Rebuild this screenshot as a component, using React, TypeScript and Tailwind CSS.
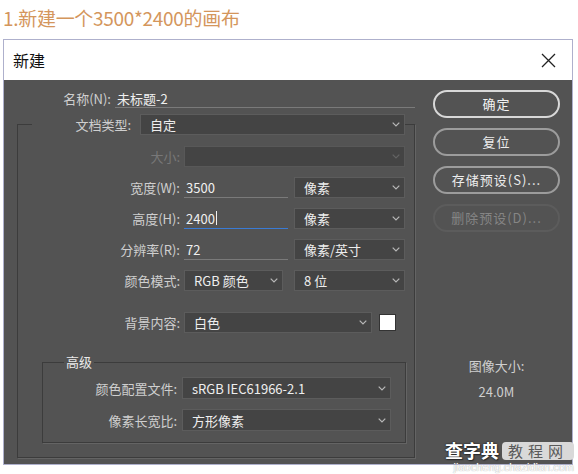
import React from 'react';

const CJK = { fontFamily: '"Noto Sans CJK SC", "Liberation Sans", sans-serif' };

const Chevron = ({ dim }: { dim?: boolean }) => (
  <svg width="8" height="5" viewBox="0 0 8 5" className={dim ? 'text-[#646464]' : 'text-[#b8b8b8]'}>
    <path d="M0.7 0.7 L4 4 L7.3 0.7" fill="none" stroke="currentColor" strokeWidth="1.2" />
  </svg>
);

const Select = ({ value, className = '', dim }: { value?: string; className?: string; dim?: boolean }) => (
  <div
    className={`flex h-[21px] items-center justify-between border border-[#5c5c5c] bg-[#444444] pl-[9px] pr-[4px] text-[13px] leading-none text-[#eeeeee] ${className}`}
  >
    <span>{value}</span>
    <Chevron dim={dim} />
  </div>
);

const Field = ({ value, active, className = '' }: { value: string; active?: boolean; className?: string }) => (
  <div
    className={`flex h-[21px] items-center border-b pl-[2px] text-[13px] leading-none text-[#f0f0f0] ${
      active ? 'border-[#3a7bd5]' : 'border-[#7a7a7a]'
    } ${className}`}
  >
    <span>{value}</span>
    {active && <span className="ml-[1px] h-[14px] w-px bg-[#f0f0f0]" />}
  </div>
);

const Label = ({ text, className = '', dim }: { text: string; className?: string; dim?: boolean }) => (
  <div className={`shrink-0 text-right text-[13px] leading-none ${dim ? 'text-[#787878]' : 'text-[#cfcfcf]'} ${className}`}>
    {text}
  </div>
);

const Button = ({ text, variant }: { text: string; variant: 'primary' | 'normal' | 'disabled' }) => {
  const cls =
    variant === 'primary'
      ? 'border-2 border-[#d8d8d8] text-[#f2f2f2]'
      : variant === 'normal'
      ? 'border-2 border-[#9c9c9c] text-[#ececec]'
      : 'border-2 border-[#5c5c5c] text-[#858585]';
  return (
    <div className={`flex h-[28px] w-[127px] items-center justify-center rounded-full text-[13px] tracking-[1px] ${cls}`}>
      {text}
    </div>
  );
};

export default function App() {
  return (
    <div className="relative h-[474px] w-[578px] overflow-hidden bg-white" style={CJK}>
      <div className="h-[38px] pl-[3px] pt-[4px] text-[19px] leading-[28px] tracking-[-0.3px] text-[#d4965c]">
        1.新建一个3500*2400的画布
      </div>

      <div className="ml-[3px] mt-[1px] flex h-[426px] w-[570px] flex-col border border-[#aeb0cc]">
        {/* title bar */}
        <div className="flex h-[40px] shrink-0 items-center justify-between bg-white pl-[9px] pr-[16px]">
          <span className="text-[16px] text-[#111111]">新建</span>
          <svg width="15" height="15" viewBox="0 0 15 15">
            <path d="M1 1 L14 14 M14 1 L1 14" stroke="#222" strokeWidth="1.3" />
          </svg>
        </div>

        {/* body */}
        <div className="flex flex-1 bg-[#535353] pl-[13px]">
          {/* left column */}
          <div className="flex w-[398px] flex-col pt-[9px]">
            <div className="flex h-[19px] items-center">
              <Label text="名称(N):" className="w-[94px]" />
              <div className="ml-[4px] flex h-[19px] flex-1 items-center border-b border-[#7a7a7a] pl-[2px] text-[13px] leading-none text-[#f0f0f0]">
                未标题-2
              </div>
            </div>

            <fieldset className="mt-[6px] border border-[#3c3c3c] pb-[14px] shadow-[1px_1px_0_#646464]">
              <legend className="ml-[14px]">
                <div className="flex h-[21px] items-center">
                  <Label text="文档类型:" className="w-[101px] pr-[2px]" />
                  <Select value="自定" className="ml-[7px] w-[265px]" />
                </div>
              </legend>

              <div className="flex flex-col gap-[10px] pt-[11px]">
                <div className="flex items-center">
                  <Label text="大小:" className="w-[162px]" dim />
                  <Select className="ml-[4px] w-[221px] border-[#585858] bg-[#4e4e4e]" dim />
                </div>
                <div className="flex items-center">
                  <Label text="宽度(W):" className="w-[162px]" />
                  <Field value="3500" className="ml-[4px] w-[104px]" />
                  <Select value="像素" className="ml-[6px] w-[111px]" />
                </div>
                <div className="flex items-center">
                  <Label text="高度(H):" className="w-[162px]" />
                  <Field value="2400" active className="ml-[4px] w-[104px]" />
                  <Select value="像素" className="ml-[6px] w-[111px]" />
                </div>
                <div className="flex items-center">
                  <Label text="分辨率(R):" className="w-[162px]" />
                  <Field value="72" className="ml-[4px] w-[104px]" />
                  <Select value="像素/英寸" className="ml-[6px] w-[111px]" />
                </div>
                <div className="flex items-center">
                  <Label text="颜色模式:" className="w-[162px]" />
                  <Select value="RGB 颜色" className="ml-[4px] w-[99px]" />
                  <Select value="8 位" className="ml-[11px] w-[111px]" />
                </div>
                <div className="mt-[11px] flex items-center">
                  <Label text="背景内容:" className="w-[162px]" />
                  <Select value="白色" className="ml-[4px] w-[188px]" />
                  <div className="ml-[7px] h-[17px] w-[17px] border border-[#333333] bg-white" />
                </div>
              </div>

              <fieldset className="ml-[24px] mt-[20px] w-[364px] border border-[#3c3c3c] pb-[11px] shadow-[1px_1px_0_#646464]">
                <legend className="ml-[21px] px-[2px] text-[13px] leading-[18px] text-[#eaeaea]">高级</legend>
                <div className="flex flex-col gap-[10px] pt-[6px]">
                  <div className="flex items-center">
                    <Label text="颜色配置文件:" className="w-[134px]" />
                    <Select value="sRGB IEC61966-2.1" className="ml-[5px] h-[22px] w-[209px]" />
                  </div>
                  <div className="flex items-center">
                    <Label text="像素长宽比:" className="w-[134px]" />
                    <Select value="方形像素" className="ml-[5px] h-[22px] w-[209px]" />
                  </div>
                </div>
              </fieldset>
            </fieldset>
          </div>

          {/* right column */}
          <div className="ml-[18px] flex flex-col pt-[10px]">
            <div className="flex flex-col gap-[10px]">
              <Button text="确定" variant="primary" />
              <Button text="复位" variant="normal" />
              <Button text="存储预设(S)..." variant="normal" />
              <Button text="删除预设(D)..." variant="disabled" />
            </div>
            <div className="mt-[127px] flex flex-col items-center text-[13px] leading-none text-[#cfcfcf]">
              <span>图像大小:</span>
              <span className="mt-[13px]">24.0M</span>
            </div>
          </div>
        </div>
      </div>

      {/* watermark */}
      <div className="absolute left-[445px] top-[440px] flex flex-col items-end">
        <div className="flex items-center">
          <span className="text-[18px] font-bold leading-[21px] text-white [text-shadow:0_0_2px_#222,0_0_1px_#222,1px_1px_1px_#333]">
            查字典
          </span>
          <span className="ml-[3px] rounded-[4px] bg-[#d9d9d9] px-[6px] text-[15px] leading-[18px] tracking-[5px] text-[#5a5a5a]">
            教程网
          </span>
        </div>
        <span
          className="text-[11px] leading-[12px] text-white [text-shadow:0_0_1px_#888]"
          style={{ fontFamily: '"Liberation Sans", sans-serif' }}
        >
          jiaocheng.chazidian.com
        </span>
      </div>
    </div>
  );
}
